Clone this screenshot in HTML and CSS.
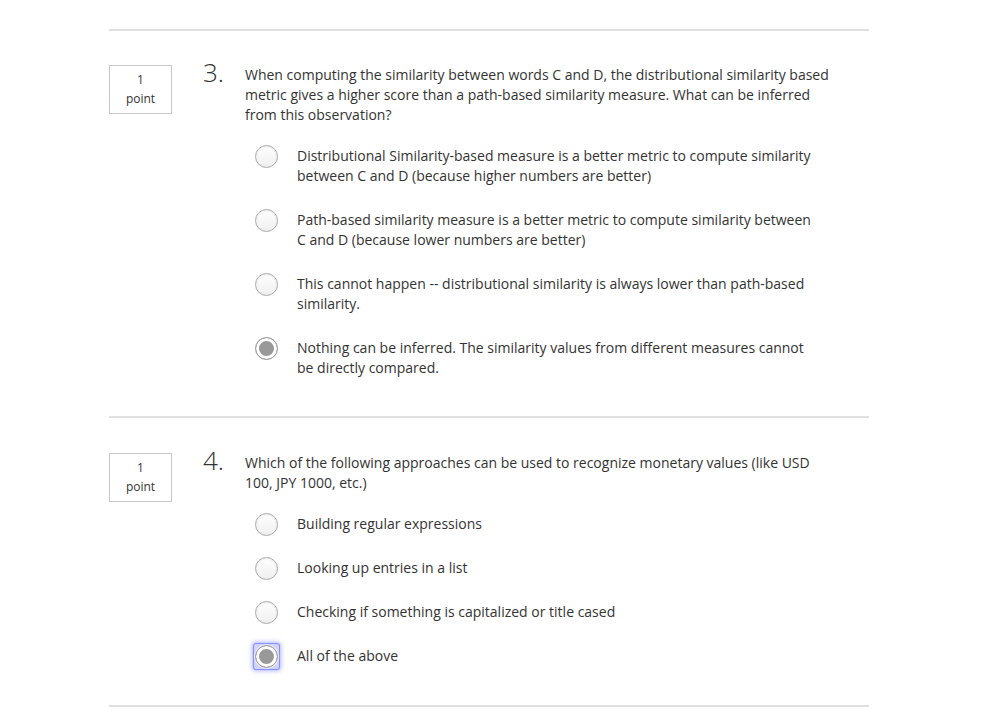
FILE: index.html
```html
<!DOCTYPE html>
<html>
<head>
<meta charset="utf-8">
<link rel="stylesheet" href="styles.css">
</head>
<body>
<div class="quiz">
  <div class="question">
    <div class="points"><span>1</span><span>point</span></div>
    <div class="num">3.</div>
    <div class="body">
      <div class="prompt">When computing the similarity between words C and D, the distributional similarity based metric gives a higher score than a path-based similarity measure. What can be inferred from this observation?</div>
      <div class="options">
        <div class="option"><span class="radio"></span><span class="label">Distributional Similarity-based measure is a better metric to compute similarity between C and D (because higher numbers are better)</span></div>
        <div class="option"><span class="radio"></span><span class="label">Path-based similarity measure is a better metric to compute similarity between C and D (because lower numbers are better)</span></div>
        <div class="option"><span class="radio"></span><span class="label">This cannot happen -- distributional similarity is always lower than path-based similarity.</span></div>
        <div class="option"><span class="radio checked"></span><span class="label">Nothing can be inferred. The similarity values from different measures cannot be directly compared.</span></div>
      </div>
    </div>
  </div>
  <div class="question">
    <div class="points"><span>1</span><span>point</span></div>
    <div class="num">4.</div>
    <div class="body">
      <div class="prompt">Which of the following approaches can be used to recognize monetary values (like USD 100, JPY 1000, etc.)</div>
      <div class="options">
        <div class="option"><span class="radio"></span><span class="label">Building regular expressions</span></div>
        <div class="option"><span class="radio"></span><span class="label">Looking up entries in a list</span></div>
        <div class="option"><span class="radio"></span><span class="label">Checking if something is capitalized or title cased</span></div>
        <div class="option"><span class="radio checked focused"></span><span class="label">All of the above</span></div>
      </div>
    </div>
  </div>
</div>
</body>
</html>
```

FILE: styles.css
```css
html, body {
  margin: 0;
  padding: 0;
  background: #fff;
}
body {
  font-family: "Open Sans", "Liberation Sans", sans-serif;
  color: #333;
}
.quiz {
  width: 760px;
  margin-left: 109px;
  padding-top: 29px;
}
.quiz::before {
  content: "";
  display: block;
  height: 2px;
  background: #e0e0e0;
}
.question {
  display: flex;
  align-items: flex-start;
  padding: 34px 0 38px;
  border-bottom: 2px solid #e0e0e0;
}
.question + .question {
  padding-top: 35px;
  padding-bottom: 39px;
}
.points {
  width: 61px;
  height: 43px;
  border: 1px solid #c8c8c8;
  display: flex;
  flex-direction: column;
  align-items: center;
  padding-top: 4px;
  font-size: 12px;
  line-height: 19px;
  color: #333;
}
.num {
  width: 42px;
  margin-left: 31px;
  font-size: 26px;
  font-weight: 300;
  line-height: 20px;
  margin-top: -3px;
  color: #333;
}
.body {
  width: 590px;
}
.prompt {
  font-size: 14px;
  line-height: 20px;
}
.options {
  margin-top: 21px;
  display: flex;
  flex-direction: column;
  gap: 24px;
}
.option {
  display: flex;
  align-items: flex-start;
  padding-left: 10px;
}
.radio {
  flex: none;
  width: 21px;
  height: 21px;
  border-radius: 50%;
  border: 1px solid #a9a9a9;
  background: linear-gradient(#ffffff, #efefef);
  box-shadow: inset 0 1px 2px rgba(0,0,0,0.08);
  margin: -1px 19px -3px 0;
  position: relative;
}
.radio.checked {
  background: #999;
  box-shadow: inset 0 0 0 3px #fff;
  border-color: #a0a0a0;
}
.radio.focused::after {
  content: "";
  position: absolute;
  left: -3px;
  top: -3px;
  width: 25px;
  height: 25px;
  border-radius: 3px;
  background: radial-gradient(circle at center, transparent 11.5px, rgba(120, 130, 255, 0.35) 12.5px);
  box-shadow: 0 0 4px 1px rgba(110, 120, 255, 0.55);
  border: 1px solid rgba(110, 120, 255, 0.75);
}
.label {
  width: 520px;
  font-size: 14px;
  line-height: 20px;
}
```
